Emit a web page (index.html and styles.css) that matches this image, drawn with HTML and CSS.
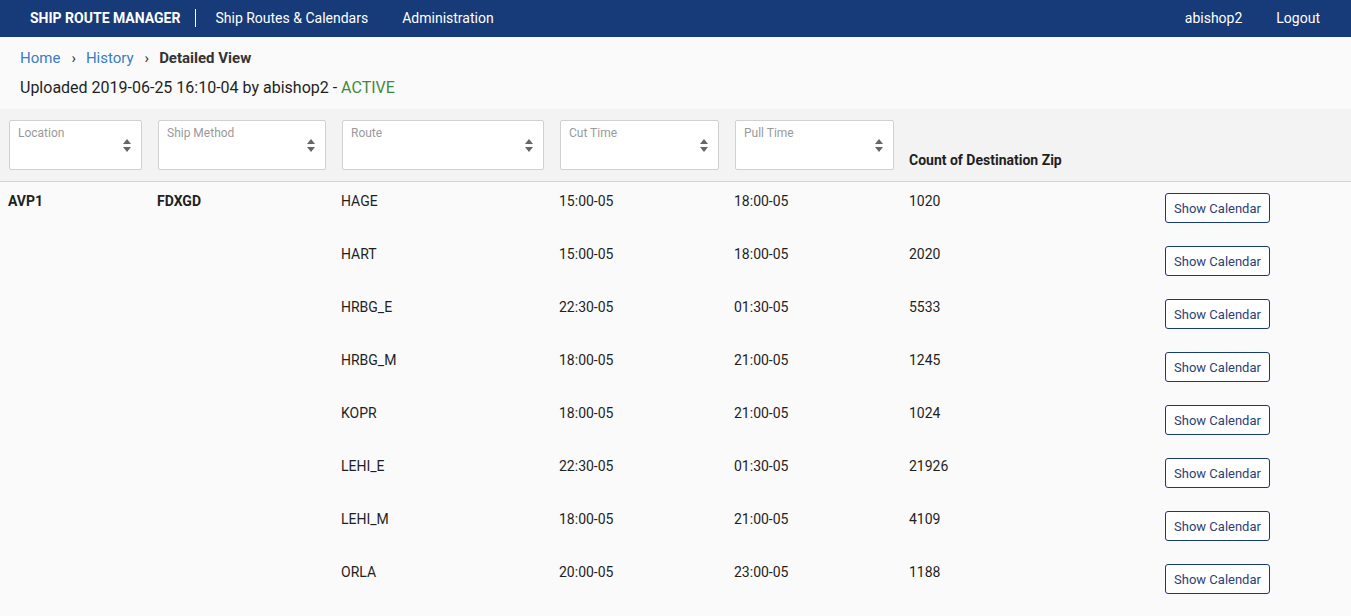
FILE: index.html
```html
<!DOCTYPE html>
<html>
<head>
<meta charset="utf-8">
<link rel="stylesheet" href="styles.css">
</head>
<body>
<nav class="navbar">
  <div class="nav-left">
    <span class="brand">SHIP ROUTE MANAGER</span>
    <span class="divider"></span>
    <a class="nav-link">Ship Routes &amp; Calendars</a>
    <a class="nav-link">Administration</a>
  </div>
  <div class="nav-right">
    <a class="nav-link">abishop2</a>
    <a class="nav-link">Logout</a>
  </div>
</nav>
<div class="crumbs">
  <a class="crumb-link">Home</a><span class="sep">›</span><a class="crumb-link">History</a><span class="sep">›</span><span class="crumb-current">Detailed View</span>
</div>
<div class="uploaded">Uploaded 2019-06-25 16:10-04 by abishop2 - <span class="active">ACTIVE</span></div>

<div class="table">
  <div class="head row-grid">
    <div class="hcell"><div class="select"><span class="sel-label">Location</span><span class="arrows"></span></div></div>
    <div class="hcell"><div class="select"><span class="sel-label">Ship Method</span><span class="arrows"></span></div></div>
    <div class="hcell"><div class="select"><span class="sel-label">Route</span><span class="arrows"></span></div></div>
    <div class="hcell"><div class="select"><span class="sel-label">Cut Time</span><span class="arrows"></span></div></div>
    <div class="hcell"><div class="select"><span class="sel-label">Pull Time</span><span class="arrows"></span></div></div>
    <div class="hcell count-head">Count of Destination Zip</div>
    <div class="hcell"></div>
  </div>

  <div class="row row-grid"><div class="cell bold">AVP1</div><div class="cell bold">FDXGD</div><div class="cell">HAGE</div><div class="cell">15:00-05</div><div class="cell">18:00-05</div><div class="cell">1020</div><div class="cell"><button class="btn">Show Calendar</button></div></div>
  <div class="row row-grid"><div class="cell"></div><div class="cell"></div><div class="cell">HART</div><div class="cell">15:00-05</div><div class="cell">18:00-05</div><div class="cell">2020</div><div class="cell"><button class="btn">Show Calendar</button></div></div>
  <div class="row row-grid"><div class="cell"></div><div class="cell"></div><div class="cell">HRBG_E</div><div class="cell">22:30-05</div><div class="cell">01:30-05</div><div class="cell">5533</div><div class="cell"><button class="btn">Show Calendar</button></div></div>
  <div class="row row-grid"><div class="cell"></div><div class="cell"></div><div class="cell">HRBG_M</div><div class="cell">18:00-05</div><div class="cell">21:00-05</div><div class="cell">1245</div><div class="cell"><button class="btn">Show Calendar</button></div></div>
  <div class="row row-grid"><div class="cell"></div><div class="cell"></div><div class="cell">KOPR</div><div class="cell">18:00-05</div><div class="cell">21:00-05</div><div class="cell">1024</div><div class="cell"><button class="btn">Show Calendar</button></div></div>
  <div class="row row-grid"><div class="cell"></div><div class="cell"></div><div class="cell">LEHI_E</div><div class="cell">22:30-05</div><div class="cell">01:30-05</div><div class="cell">21926</div><div class="cell"><button class="btn">Show Calendar</button></div></div>
  <div class="row row-grid"><div class="cell"></div><div class="cell"></div><div class="cell">LEHI_M</div><div class="cell">18:00-05</div><div class="cell">21:00-05</div><div class="cell">4109</div><div class="cell"><button class="btn">Show Calendar</button></div></div>
  <div class="row row-grid"><div class="cell"></div><div class="cell"></div><div class="cell">ORLA</div><div class="cell">20:00-05</div><div class="cell">23:00-05</div><div class="cell">1188</div><div class="cell"><button class="btn">Show Calendar</button></div></div>
</div>
</body>
</html>
```

FILE: styles.css
```css
* { box-sizing: border-box; }
html, body { margin: 0; padding: 0; }
body {
  font-family: Roboto, "Liberation Sans", sans-serif;
  background: #fafafa;
  color: #1f1f1f;
  overflow: hidden;
}
.navbar {
  height: 37px;
  background: #173a78;
  color: #fff;
  display: flex;
  justify-content: space-between;
  align-items: center;
  font-size: 14px;
  padding-bottom: 1px;
}
.nav-left { display: flex; align-items: center; padding-left: 30px; }
.brand { font-weight: 700; font-size: 14px; }
.divider { width: 1px; height: 18px; background: #fff; margin: 0 19px 0 15px; }
.nav-link { color: #fff; text-decoration: none; }
.nav-left .nav-link { margin-right: 34px; }
.nav-right { display: flex; align-items: center; padding-right: 31px; gap: 34px; }
.crumbs {
  padding: 11px 20px 0;
  font-size: 15px;
  line-height: 20px;
  display: flex;
  align-items: center;
}
.crumb-link { color: #3b7cc4; }
.sep { color: #333; margin: 0 10px 0 11px; font-size: 15px; }
.crumb-current { font-weight: 700; color: #333; }
.uploaded {
  padding: 10px 20px 0;
  font-size: 16px;
  line-height: 20px;
  height: 41px;
  color: #1f1f1f;
}
.active { color: #3f8a3f; }
.table { width: 100%; }
.row-grid {
  display: grid;
  grid-template-columns: 149px 184px 218px 175px 175px 256px 1fr;
  padding-left: 8px;
}
.head {
  background: #f3f3f3;
  border-bottom: 1px solid #d4d4d4;
  padding-top: 11px;
  padding-bottom: 11px;
  align-items: end;
}
.select {
  position: relative;
  height: 50px;
  margin-left: 1px;
  margin-right: 15px;
  background: #fff;
  border: 1px solid #d0d0d0;
  border-radius: 2px;
}
.sel-label {
  position: absolute;
  left: 8px;
  top: 5px;
  font-size: 12px;
  color: #9a9a9a;
}
.arrows {
  position: absolute;
  right: 9px;
  top: 18px;
  width: 9px;
  height: 13px;
}
.arrows::before, .arrows::after {
  content: "";
  position: absolute;
  left: 0;
  border-left: 4.5px solid transparent;
  border-right: 4.5px solid transparent;
}
.arrows::before { top: 0; border-bottom: 5px solid #666; }
.arrows::after { bottom: 0; border-top: 5px solid #666; }
.count-head {
  font-weight: 700;
  font-size: 14px;
  color: #1f1f1f;
  line-height: 18px;
  padding-bottom: 1px;
}
.row {
  height: 53px;
  font-size: 14px;
  line-height: 20px;
  color: #1f1f1f;
}
.cell { padding-top: 9px; }
.bold { font-weight: 700; }
.btn {
  margin-top: 2px;
  height: 30px;
  width: 105px;
  background: #fff;
  border: 1px solid #173a78;
  border-radius: 3px;
  color: #2b4176;
  font-family: Roboto, "Liberation Sans", sans-serif;
  font-size: 13px;
  padding: 0;
}
```
